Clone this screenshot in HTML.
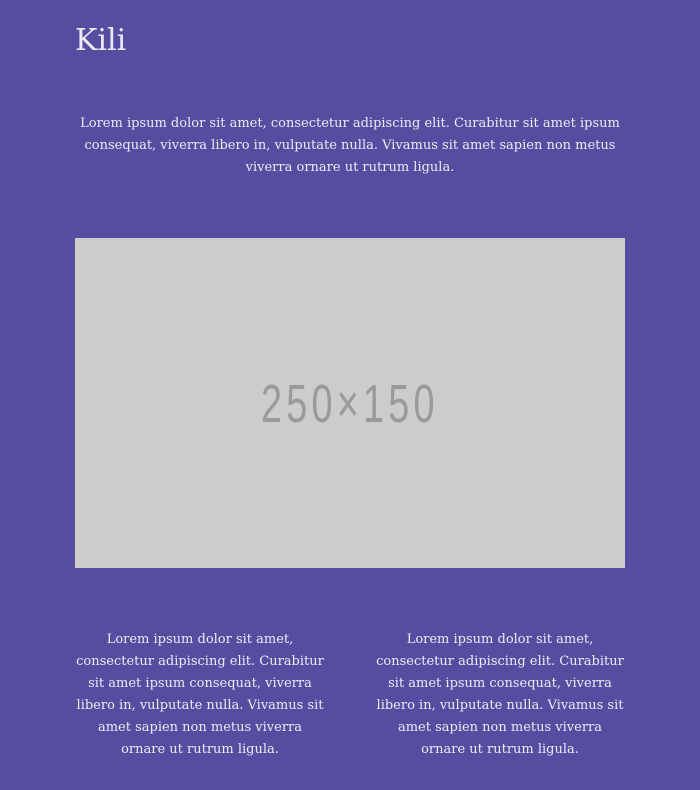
<!DOCTYPE html>
<html><head><style>
body{margin:0;background:#554da0;width:700px;height:790px;overflow:hidden;font-family:"DejaVu Serif","Liberation Serif",serif;color:#eeeaf4}
h1{position:absolute;left:75px;top:25px;margin:0;font-weight:normal;font-size:30px;line-height:32px}
.p{position:absolute;font-size:13px;line-height:22px;text-align:center}
.img{position:absolute;left:75px;top:238px;width:550px;height:330px;background:#cccccc}
.ph{position:absolute;left:75px;width:550px;top:377px;text-align:center}
.ph span{display:inline-block;font-family:"Liberation Sans",sans-serif;font-size:54px;color:#9a9a9a;letter-spacing:6px;transform:scaleX(0.7);line-height:54px}
</style></head><body>
<h1>Kili</h1>
<div class="p" style="left:75px;top:113px;width:550px">Lorem ipsum dolor sit amet, consectetur adipiscing elit. Curabitur sit amet ipsum consequat, viverra libero in, vulputate nulla. Vivamus sit amet sapien non metus viverra ornare ut rutrum ligula.</div>
<div class="img"></div>
<div class="ph"><span>250×150</span></div>
<div class="p" style="left:75px;top:629px;width:250px">Lorem ipsum dolor sit amet, consectetur adipiscing elit. Curabitur sit amet ipsum consequat, viverra libero in, vulputate nulla. Vivamus sit amet sapien non metus viverra ornare ut rutrum ligula.</div>
<div class="p" style="left:375px;top:629px;width:250px">Lorem ipsum dolor sit amet, consectetur adipiscing elit. Curabitur sit amet ipsum consequat, viverra libero in, vulputate nulla. Vivamus sit amet sapien non metus viverra ornare ut rutrum ligula.</div>
</body></html>
